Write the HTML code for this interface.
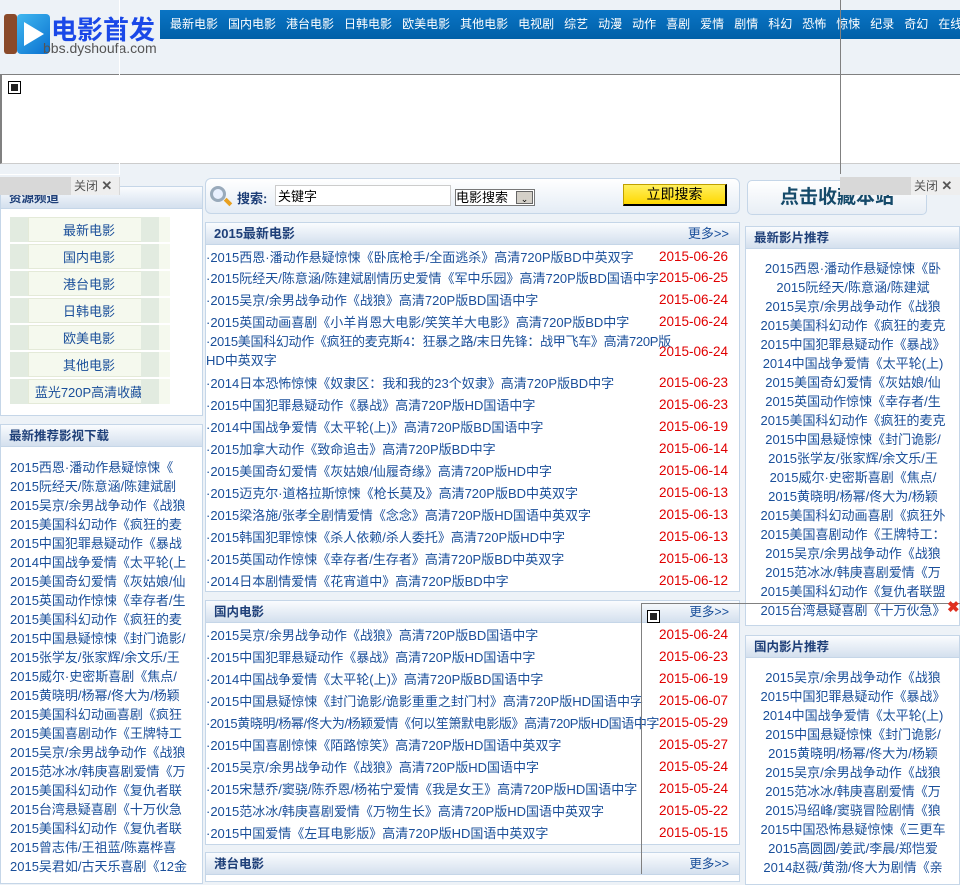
<!DOCTYPE html>
<html><head><meta charset="utf-8"><style>
*{margin:0;padding:0;box-sizing:border-box}
body{width:960px;height:873px;overflow:hidden;background:#edf2f7;font-family:"Liberation Sans","Noto Sans CJK SC",sans-serif;font-size:13px;color:#1a4f9a;position:relative}
.a{position:absolute}
.nav{left:160px;top:10px;width:800px;height:29px;background:linear-gradient(#0a74c4,#0060a8);color:#fff;font-size:12px;line-height:29px;white-space:nowrap;padding-left:10px;overflow:hidden}
.nav span{margin-right:10px}
.panel{background:#fff;border:1px solid #c5d6e8}
.hd{background:linear-gradient(#fafcfe,#d4e0ee);height:22px;line-height:22px;font-weight:bold;color:#1e3f78;font-size:12.5px;padding-left:8px;border-bottom:1px solid #c5d6e8;position:relative}
.hd .m{position:absolute;right:10px;top:0;font-weight:normal;color:#1a4f9a}
.li{position:absolute;left:0;white-space:nowrap;font-size:13px}
.dt{position:absolute;left:453px;color:#e00000;font-size:13.5px;margin-top:2px}
.btn{position:absolute;left:10px;width:160px;height:25px;background:#f5f9ee}
.btn i{position:absolute;top:0;width:18px;height:25px;background:#e2ebe0}
.btn b{position:absolute;left:18px;width:122px;top:0;height:25px;line-height:25px;text-align:center;font-weight:normal;border:1px solid #e4ead8}
.rl{position:absolute;left:0;width:214px;text-align:center;white-space:nowrap;overflow:hidden}
.ll{position:absolute;left:9px;white-space:nowrap;width:190px;overflow:hidden}
.xi{position:absolute;width:13px;height:13px;border:1px solid #000;background:#fff}
.xi:after{content:"";position:absolute;left:2px;top:2px;width:7px;height:7px;background:#222}
</style></head><body>
<div class="a" style="left:4px;top:14px;width:13px;height:40px;background:#8a4a2a;border-radius:3px"></div>
<div class="a" style="left:17px;top:14px;width:33px;height:40px;background:linear-gradient(135deg,#40b8f0,#0a70d0);border-radius:4px"></div>
<div class="a" style="left:24px;top:22px;width:0;height:0;border-left:20px solid #fff;border-top:12px solid transparent;border-bottom:12px solid transparent"></div>
<div class="a" style="left:51px;top:10px;font-size:26px;font-weight:bold;color:#1a48e8">电影首发</div>
<div class="a" style="left:43px;top:40px;font-size:14px;color:#555">bbs.dyshoufa.com</div>
<div class="a nav"><span>最新电影</span><span>国内电影</span><span>港台电影</span><span>日韩电影</span><span>欧美电影</span><span>其他电影</span><span>电视剧</span><span>综艺</span><span>动漫</span><span>动作</span><span>喜剧</span><span>爱情</span><span>剧情</span><span>科幻</span><span>恐怖</span><span>惊悚</span><span>纪录</span><span>奇幻</span><span>在线</span></div>
<div class="a" style="left:0;top:74px;width:960px;height:90px;background:#fff;border-top:1px solid #808080;border-left:2px solid #808080;border-bottom:1px solid #ccc"></div>
<div class="xi" style="left:8px;top:81px"></div>
<div class="a" style="left:119px;top:0;width:1px;height:175px;background:#fff"></div>
<div class="a" style="left:0;top:174px;width:120px;height:1px;background:#fff"></div>
<div class="a" style="left:840px;top:0;width:1px;height:174px;background:#808080"></div>
<div class="a panel" style="left:0;top:186px;width:203px;height:230px"><div class="hd">资源频道</div></div>
<div class="a" style="left:0;top:177px;width:120px;height:18px;background:#d8d8d8"></div>
<div class="a" style="left:71px;top:177px;width:48px;height:18px;background:#eee;color:#555;font-size:12px;line-height:18px;padding-left:3px">关闭 <b style="font-size:13px">✕</b></div>
<div class="btn" style="top:217px"><i style="left:0"></i><b>最新电影</b><i style="left:131px"></i></div>
<div class="btn" style="top:244px"><i style="left:0"></i><b>国内电影</b><i style="left:131px"></i></div>
<div class="btn" style="top:271px"><i style="left:0"></i><b>港台电影</b><i style="left:131px"></i></div>
<div class="btn" style="top:298px"><i style="left:0"></i><b>日韩电影</b><i style="left:131px"></i></div>
<div class="btn" style="top:325px"><i style="left:0"></i><b>欧美电影</b><i style="left:131px"></i></div>
<div class="btn" style="top:352px"><i style="left:0"></i><b>其他电影</b><i style="left:131px"></i></div>
<div class="btn" style="top:379px"><i style="left:0"></i><b>蓝光720P高清收藏</b><i style="left:131px"></i></div>
<div class="a panel" style="left:0;top:424px;width:203px;height:460px"><div class="hd">最新推荐影视下载</div>
<div class="ll" style="top:32px">2015西恩·潘动作悬疑惊悚《</div>
<div class="ll" style="top:51px">2015阮经天/陈意涵/陈建斌剧</div>
<div class="ll" style="top:70px">2015吴京/余男战争动作《战狼</div>
<div class="ll" style="top:89px">2015美国科幻动作《疯狂的麦</div>
<div class="ll" style="top:108px">2015中国犯罪悬疑动作《暴战</div>
<div class="ll" style="top:127px">2014中国战争爱情《太平轮(上</div>
<div class="ll" style="top:146px">2015美国奇幻爱情《灰姑娘/仙</div>
<div class="ll" style="top:165px">2015英国动作惊悚《幸存者/生</div>
<div class="ll" style="top:184px">2015美国科幻动作《疯狂的麦</div>
<div class="ll" style="top:203px">2015中国悬疑惊悚《封门诡影/</div>
<div class="ll" style="top:222px">2015张学友/张家辉/余文乐/王</div>
<div class="ll" style="top:241px">2015威尔·史密斯喜剧《焦点/</div>
<div class="ll" style="top:260px">2015黄晓明/杨幂/佟大为/杨颖</div>
<div class="ll" style="top:279px">2015美国科幻动画喜剧《疯狂</div>
<div class="ll" style="top:298px">2015美国喜剧动作《王牌特工</div>
<div class="ll" style="top:317px">2015吴京/余男战争动作《战狼</div>
<div class="ll" style="top:336px">2015范冰冰/韩庚喜剧爱情《万</div>
<div class="ll" style="top:355px">2015美国科幻动作《复仇者联</div>
<div class="ll" style="top:374px">2015台湾悬疑喜剧《十万伙急</div>
<div class="ll" style="top:393px">2015美国科幻动作《复仇者联</div>
<div class="ll" style="top:412px">2015曾志伟/王祖蓝/陈嘉桦喜</div>
<div class="ll" style="top:431px">2015吴君如/古天乐喜剧《12金</div>
</div>
<div class="a" style="left:205px;top:178px;width:535px;height:36px;background:linear-gradient(#fff,#e4ecf5);border:1px solid #c5d6e8;border-radius:6px"></div>
<div class="a" style="left:210px;top:186px;width:16px;height:16px;border:3px solid #9ab;border-radius:50%;background:#e8f0ff"></div>
<div class="a" style="left:224px;top:200px;width:8px;height:4px;background:#e8a020;transform:rotate(45deg)"></div>
<div class="a" style="left:237px;top:188px;font-weight:bold;color:#1e3f78;font-size:13px">搜索:</div>
<div class="a" style="left:275px;top:185px;width:176px;height:21px;background:#fff;border:1px solid #ccc;color:#000;font-size:13px;padding-left:2px">关键字</div>
<div class="a" style="left:455px;top:189px;width:80px;height:17px;background:#fff;border:1px solid #777;color:#000;font-size:13px;line-height:15px">电影搜索<span style="position:absolute;right:1px;top:1px;width:17px;height:13px;background:#d4d0c8;border:1px solid #666;font-size:9px;text-align:center">⌄</span></div>
<div class="a" style="left:623px;top:184px;width:104px;height:22px;background:linear-gradient(#fff060,#ffd800);border:1px solid #c0a000;border-right:2px solid #000;border-bottom:2px solid #000;text-align:center;line-height:19px;color:#000;font-size:14px">立即搜索</div>
<div class="a panel" style="left:205px;top:222px;width:535px;height:370px"><div class="hd" style="font-size:13px">2015最新电影<span class="m">更多&gt;&gt;</span></div></div>
<div class="a" style="left:206px;top:0;width:534px;height:873px">
<div class="li" style="top:247px">·2015西恩·潘动作悬疑惊悚《卧底枪手/全面逃杀》高清720P版BD中英双字</div><div class="dt" style="top:247px">2015-06-26</div>
<div class="li" style="top:268px">·2015阮经天/陈意涵/陈建斌剧情历史爱情《军中乐园》高清720P版BD国语中字</div><div class="dt" style="top:268px">2015-06-25</div>
<div class="li" style="top:290px">·2015吴京/余男战争动作《战狼》高清720P版BD国语中字</div><div class="dt" style="top:290px">2015-06-24</div>
<div class="li" style="top:312px">·2015英国动画喜剧《小羊肖恩大电影/笑笑羊大电影》高清720P版BD中字</div><div class="dt" style="top:312px">2015-06-24</div>
<div class="li" style="top:332px;line-height:19px"><span style="letter-spacing:-0.3px">·2015美国科幻动作《疯狂的麦克斯4：狂暴之路/末日先锋：战甲飞车》高清720P版</span><br>HD中英双字</div><div class="dt" style="top:342px">2015-06-24</div>
<div class="li" style="top:373px">·2014日本恐怖惊悚《奴隶区：我和我的23个奴隶》高清720P版BD中字</div><div class="dt" style="top:373px">2015-06-23</div>
<div class="li" style="top:395px">·2015中国犯罪悬疑动作《暴战》高清720P版HD国语中字</div><div class="dt" style="top:395px">2015-06-23</div>
<div class="li" style="top:417px">·2014中国战争爱情《太平轮(上)》高清720P版BD国语中字</div><div class="dt" style="top:417px">2015-06-19</div>
<div class="li" style="top:439px">·2015加拿大动作《致命追击》高清720P版BD中字</div><div class="dt" style="top:439px">2015-06-14</div>
<div class="li" style="top:461px">·2015美国奇幻爱情《灰姑娘/仙履奇缘》高清720P版HD中字</div><div class="dt" style="top:461px">2015-06-14</div>
<div class="li" style="top:483px">·2015迈克尔·道格拉斯惊悚《枪长莫及》高清720P版BD中英双字</div><div class="dt" style="top:483px">2015-06-13</div>
<div class="li" style="top:505px">·2015梁洛施/张孝全剧情爱情《念念》高清720P版HD国语中英双字</div><div class="dt" style="top:505px">2015-06-13</div>
<div class="li" style="top:527px">·2015韩国犯罪惊悚《杀人依赖/杀人委托》高清720P版HD中字</div><div class="dt" style="top:527px">2015-06-13</div>
<div class="li" style="top:549px">·2015英国动作惊悚《幸存者/生存者》高清720P版BD中英双字</div><div class="dt" style="top:549px">2015-06-13</div>
<div class="li" style="top:571px">·2014日本剧情爱情《花宵道中》高清720P版BD中字</div><div class="dt" style="top:571px">2015-06-12</div>
</div>
<div class="a panel" style="left:205px;top:600px;width:535px;height:245px"><div class="hd">国内电影<span class="m">更多&gt;&gt;</span></div></div>
<div class="a" style="left:206px;top:0;width:534px;height:873px">
<div class="li" style="top:625px">·2015吴京/余男战争动作《战狼》高清720P版BD国语中字</div><div class="dt" style="top:625px">2015-06-24</div>
<div class="li" style="top:647px">·2015中国犯罪悬疑动作《暴战》高清720P版HD国语中字</div><div class="dt" style="top:647px">2015-06-23</div>
<div class="li" style="top:669px">·2014中国战争爱情《太平轮(上)》高清720P版BD国语中字</div><div class="dt" style="top:669px">2015-06-19</div>
<div class="li" style="top:691px">·2015中国悬疑惊悚《封门诡影/诡影重重之封门村》高清720P版HD国语中字</div><div class="dt" style="top:691px">2015-06-07</div>
<div class="li" style="top:713px;letter-spacing:-0.4px">·2015黄晓明/杨幂/佟大为/杨颖爱情《何以笙箫默电影版》高清720P版HD国语中字</div><div class="dt" style="top:713px">2015-05-29</div>
<div class="li" style="top:735px">·2015中国喜剧惊悚《陌路惊笑》高清720P版HD国语中英双字</div><div class="dt" style="top:735px">2015-05-27</div>
<div class="li" style="top:757px">·2015吴京/余男战争动作《战狼》高清720P版HD国语中字</div><div class="dt" style="top:757px">2015-05-24</div>
<div class="li" style="top:779px">·2015宋慧乔/窦骁/陈乔恩/杨祐宁爱情《我是女王》高清720P版HD国语中字</div><div class="dt" style="top:779px">2015-05-24</div>
<div class="li" style="top:801px">·2015范冰冰/韩庚喜剧爱情《万物生长》高清720P版HD国语中英双字</div><div class="dt" style="top:801px">2015-05-22</div>
<div class="li" style="top:823px">·2015中国爱情《左耳电影版》高清720P版HD国语中英双字</div><div class="dt" style="top:823px">2015-05-15</div>
</div>
<div class="a panel" style="left:205px;top:852px;width:535px;height:30px"><div class="hd">港台电影<span class="m">更多&gt;&gt;</span></div></div>
<div class="a" style="left:747px;top:180px;width:180px;height:35px;background:linear-gradient(#fff,#e8eef5);border:1px solid #c5d6e8;border-radius:5px;text-align:center;font-size:19px;font-weight:bold;color:#154a6a;line-height:33px">点击收藏本站</div>
<div class="a" style="left:840px;top:177px;width:120px;height:18px;background:#d8d8d8"></div>
<div class="a" style="left:911px;top:177px;width:49px;height:18px;background:#eee;color:#555;font-size:12px;line-height:18px;padding-left:3px">关闭 <b style="font-size:13px">✕</b></div>
<div class="a panel" style="left:745px;top:226px;width:215px;height:400px"><div class="hd">最新影片推荐</div>
<div class="rl" style="top:31px">2015西恩·潘动作悬疑惊悚《卧</div>
<div class="rl" style="top:50px">2015阮经天/陈意涵/陈建斌</div>
<div class="rl" style="top:69px">2015吴京/余男战争动作《战狼</div>
<div class="rl" style="top:88px">2015美国科幻动作《疯狂的麦克</div>
<div class="rl" style="top:107px">2015中国犯罪悬疑动作《暴战》</div>
<div class="rl" style="top:126px">2014中国战争爱情《太平轮(上)</div>
<div class="rl" style="top:145px">2015美国奇幻爱情《灰姑娘/仙</div>
<div class="rl" style="top:164px">2015英国动作惊悚《幸存者/生</div>
<div class="rl" style="top:183px">2015美国科幻动作《疯狂的麦克</div>
<div class="rl" style="top:202px">2015中国悬疑惊悚《封门诡影/</div>
<div class="rl" style="top:221px">2015张学友/张家辉/余文乐/王</div>
<div class="rl" style="top:240px">2015威尔·史密斯喜剧《焦点/</div>
<div class="rl" style="top:259px">2015黄晓明/杨幂/佟大为/杨颖</div>
<div class="rl" style="top:278px">2015美国科幻动画喜剧《疯狂外</div>
<div class="rl" style="top:297px">2015美国喜剧动作《王牌特工：</div>
<div class="rl" style="top:316px">2015吴京/余男战争动作《战狼</div>
<div class="rl" style="top:335px">2015范冰冰/韩庚喜剧爱情《万</div>
<div class="rl" style="top:354px">2015美国科幻动作《复仇者联盟</div>
<div class="rl" style="top:373px">2015台湾悬疑喜剧《十万伙急》</div>
</div>
<div class="a panel" style="left:745px;top:635px;width:215px;height:250px"><div class="hd">国内影片推荐</div>
<div class="rl" style="top:31px">2015吴京/余男战争动作《战狼</div>
<div class="rl" style="top:50px">2015中国犯罪悬疑动作《暴战》</div>
<div class="rl" style="top:69px">2014中国战争爱情《太平轮(上)</div>
<div class="rl" style="top:88px">2015中国悬疑惊悚《封门诡影/</div>
<div class="rl" style="top:107px">2015黄晓明/杨幂/佟大为/杨颖</div>
<div class="rl" style="top:126px">2015吴京/余男战争动作《战狼</div>
<div class="rl" style="top:145px">2015范冰冰/韩庚喜剧爱情《万</div>
<div class="rl" style="top:164px">2015冯绍峰/窦骁冒险剧情《狼</div>
<div class="rl" style="top:183px">2015中国恐怖悬疑惊悚《三更车</div>
<div class="rl" style="top:202px">2015高圆圆/姜武/李晨/郑恺爱</div>
<div class="rl" style="top:221px">2014赵薇/黄渤/佟大为剧情《亲</div>
</div>
<div class="a" style="left:641px;top:603px;width:320px;height:271px;border:1px solid #808080;border-right:none;border-bottom:none"></div>
<div class="xi" style="left:647px;top:610px"></div>
<div class="a" style="left:947px;top:598px;color:#e03020;font-size:15px;font-weight:bold">✖</div>
</body></html>
